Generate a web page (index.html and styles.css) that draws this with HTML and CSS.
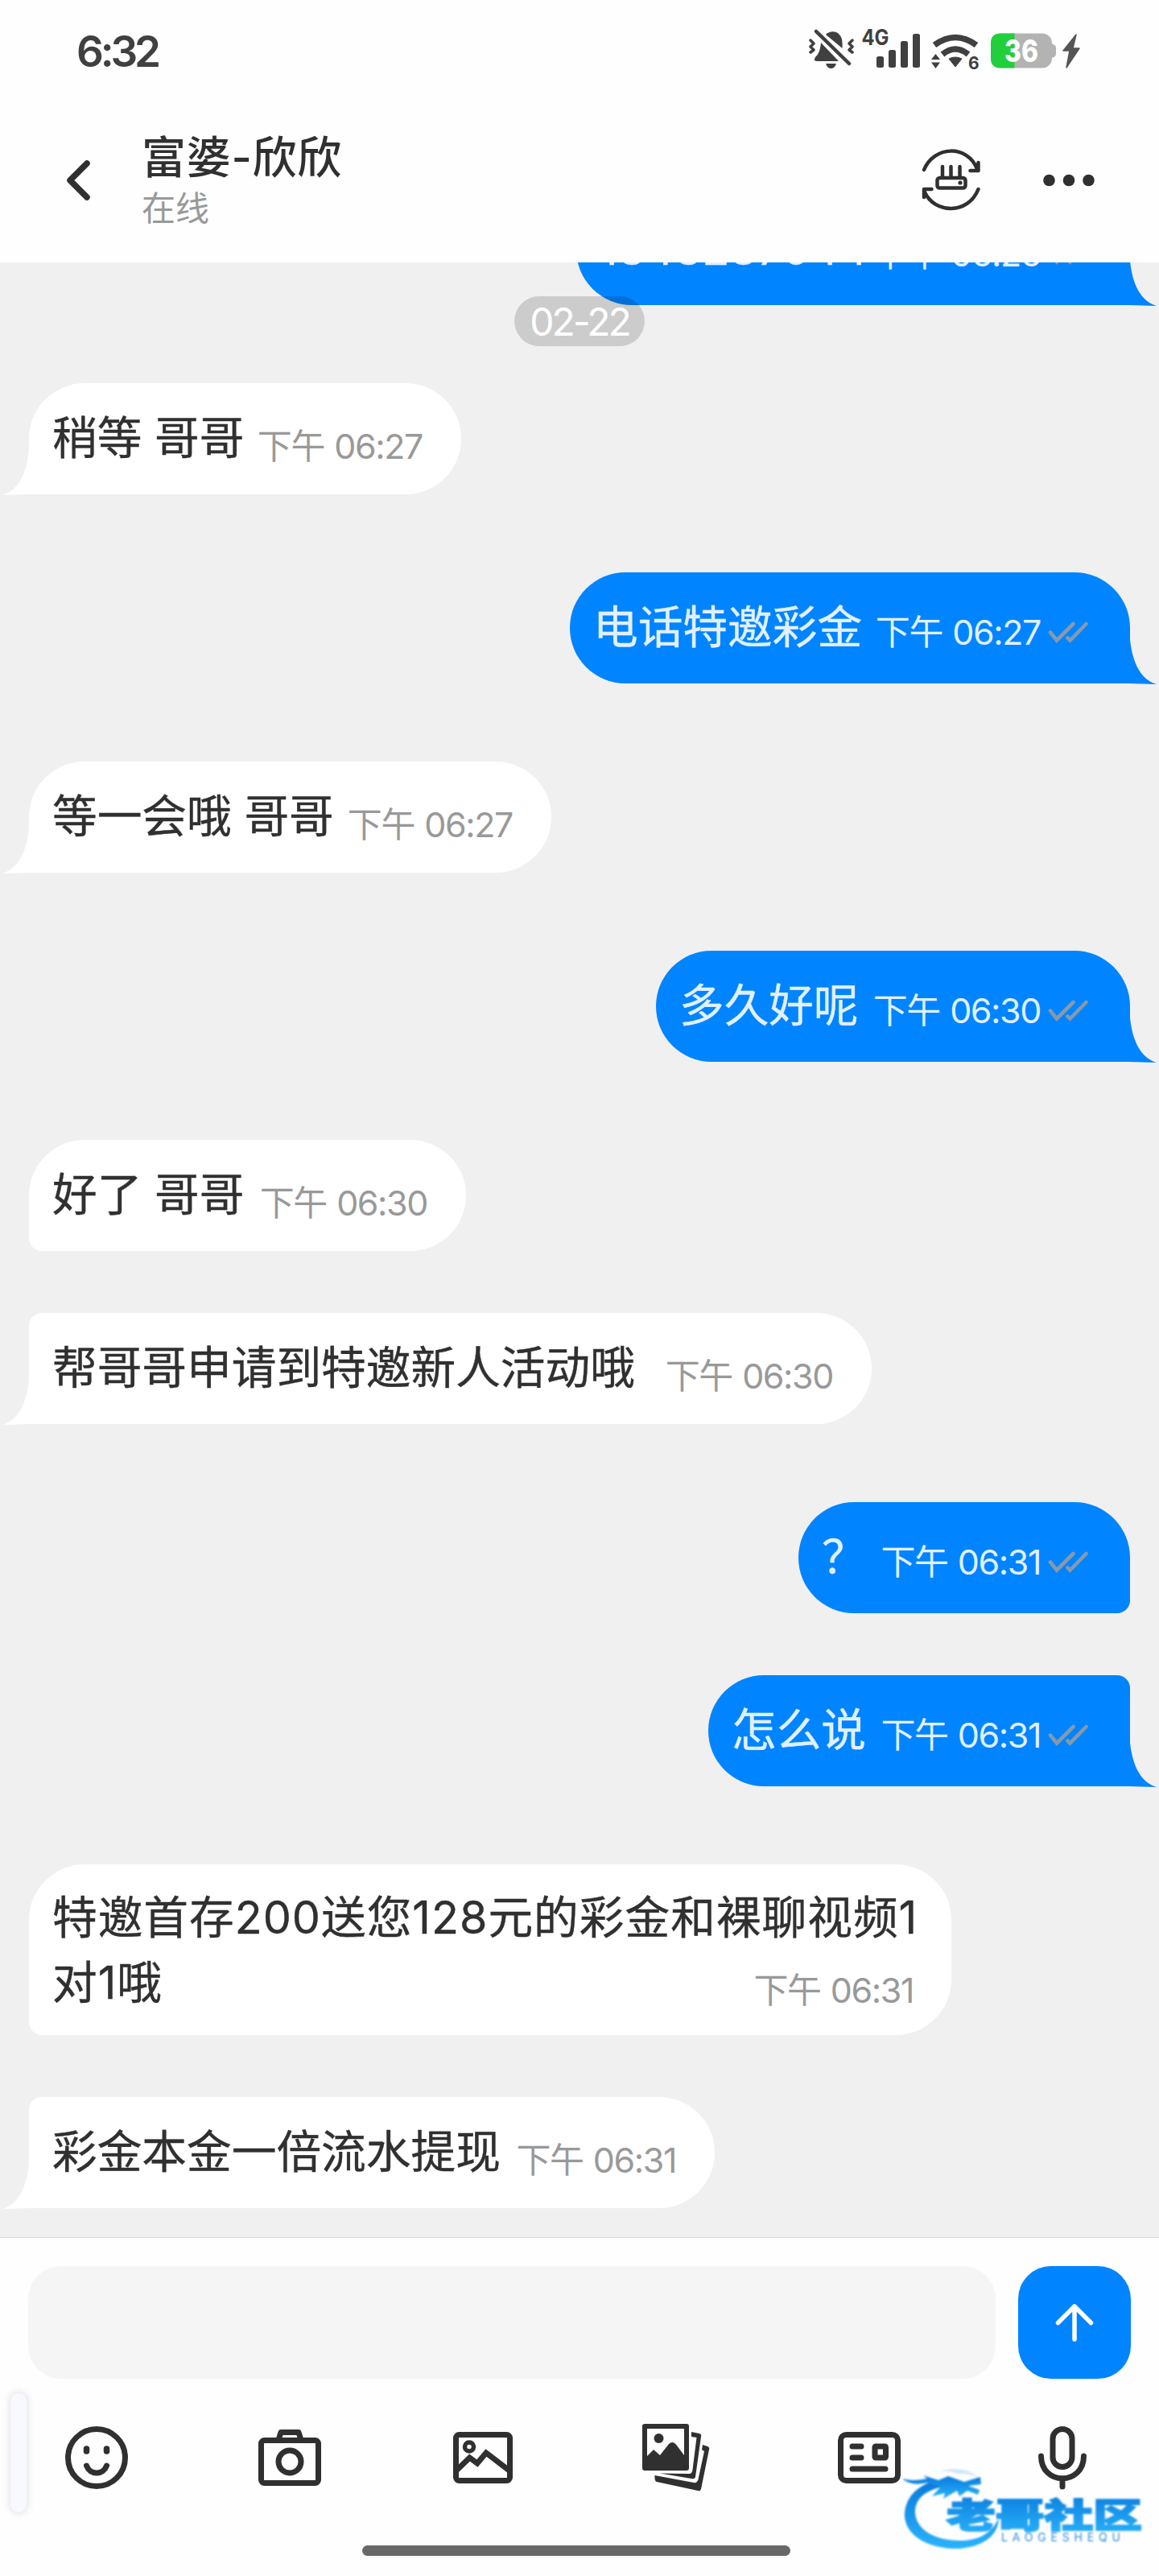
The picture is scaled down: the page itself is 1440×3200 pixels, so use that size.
FILE: index.html
```html
<!DOCTYPE html>
<html lang="zh-CN">
<head>
    <meta charset="UTF-8">
    <meta name="viewport" content="width=device-width, initial-scale=1.0">
    <title>富婆-欣欣</title>
    <link rel="stylesheet" href="styles.css">
</head>
<body>
<!-- shared shapes -->
<svg class="defs" width="0" height="0">
    <symbol id="tail-out" viewBox="0 0 34 70"><path d="M0 0C1 30 8 62 34 70L0 69Z"/></symbol>
    <symbol id="tail-in" viewBox="0 0 34 70"><path d="M34 0C33 30 26 62 0 70L34 69Z"/></symbol>
    <symbol id="read" viewBox="0 0 50 28">
        <path d="M3 13.5L11 23.5L31.500 3M24.500 20.500L27.500 23.500L47.500 3" fill="none" stroke="#8799aa" stroke-width="4.600" stroke-linecap="round"/>
    </symbol>
</svg>

<div class="screen">
    <div class="status">
        <div class="clock">6:32</div>
        <svg class="status-icons" viewBox="0 0 344 60" width="344" height="60">
            <!-- muted bell -->
            <g fill="#404040">
                <path d="M26 13C32 7 43 8 46 19Q47 24 46.500 30Z"/>
                <path d="M20 23Q19 36 13 41Q10 46 15 46H42Z"/>
                <path d="M26 49H39Q37 55 32.500 55Q28 55 26 49Z"/>
            </g>
            <g fill="none" stroke="#404040" stroke-linecap="round" stroke-linejoin="round">
                <path d="M14 9L55 49" stroke-width="4.500"/>
                <path d="M7 20L11 24L7 28L11 32L7 35M59 20L55 24L59 28L55 32L59 35" stroke-width="3.500"/>
            </g>
            <text class="net" x="70.500" y="26" textLength="34" lengthAdjust="spacingAndGlyphs">4G</text>
            <!-- signal -->
            <g fill="#404040">
                <rect x="89" y="40" width="9" height="14" rx="2.500"/>
                <rect x="104" y="32" width="9" height="22" rx="2.500"/>
                <rect x="119" y="21" width="9" height="33" rx="2.500"/>
                <rect x="134" y="12" width="9" height="42" rx="2.500"/>
            </g>
            <!-- wifi -->
            <g fill="none" stroke="#404040" stroke-width="7.500">
                <path d="M161 26Q187 7 213 26"/>
                <path d="M171 37.500Q187 24.500 203 37.500"/>
            </g>
            <path d="M179 43Q187 39 195 43L187 53Z" fill="#404040" stroke="#404040" stroke-linejoin="round"/>
            <path d="M157 44L162.500 37L168 44ZM157 47.500H168L162.500 55Z" fill="#404040"/>
            <text class="wifi-gen" x="203" y="56">6</text>
            <!-- battery -->
            <path d="M306 24Q312 26 312 29V37Q312 41 306 42Z" fill="#b3b3b3"/>
            <rect x="231" y="11.500" width="76" height="43" rx="12" fill="#b3b3b3"/>
            <path d="M260.500 11.500V54.500H243Q231 54.500 231 42.500V23.500Q231 11.500 243 11.500Z" fill="#21cf3c"/>
            <text class="battery" x="248" y="46.500" textLength="42" lengthAdjust="spacingAndGlyphs">36</text>
            <path d="M337 13L321 33H329L325 54L341 30H333Z" fill="#555" stroke="#555" stroke-width="1.500" stroke-linejoin="round"/>
        </svg>
    </div>

    <div class="header">
        <svg class="back" viewBox="0 0 40 60" width="40" height="60">
            <path d="M28 9L7 30L28 51" fill="none" stroke="#303030" stroke-width="7.500" stroke-linecap="round" stroke-linejoin="round"/>
        </svg>
        <div class="contact">
            <div class="name">富婆-欣欣</div>
            <div class="online">在线</div>
        </div>
        <svg class="line" viewBox="0 0 80 80" width="80" height="80" fill="none" stroke="#303030" stroke-width="4.500" stroke-linecap="round" stroke-linejoin="round">
            <path d="M7 27C19-3 61-5 73 26M64.500 28H74.500V18"/>
            <path d="M74.500 51C62 83 20 82 7.500 54M16.500 51H7V61"/>
            <path d="M30 23V36M40.500 23V36M51.500 23V36"/>
            <rect x="23.500" y="37" width="35" height="12.500" rx="3"/>
            <circle cx="52" cy="43" r="2.600" fill="#303030" stroke="none"/>
        </svg>
        <svg class="more" viewBox="0 0 66 20" width="66" height="20" fill="#303030">
            <circle cx="8.500" cy="10" r="7.300"/><circle cx="33" cy="10" r="7.300"/><circle cx="57.500" cy="10" r="7.300"/>
        </svg>
    </div>

    <div class="chat">
        <div class="date">02-22</div>
        <div class="msg out end w-688">
            <span class="text">1343287044</span>
            <span class="time">下午 06:26</span><svg class="check"><use href="#read"/></svg>
            <svg class="tail"><use href="#tail-out"/></svg>
        </div>
        <div class="msg in end w-537">
            <span class="text">稍等 哥哥</span>
            <span class="time">下午 06:27</span>
            <svg class="tail"><use href="#tail-in"/></svg>
        </div>
        <div class="msg out end w-696">
            <span class="text">电话特邀彩金</span>
            <span class="time">下午 06:27</span><svg class="check"><use href="#read"/></svg>
            <svg class="tail"><use href="#tail-out"/></svg>
        </div>
        <div class="msg in end w-649">
            <span class="text">等一会哦 哥哥</span>
            <span class="time">下午 06:27</span>
            <svg class="tail"><use href="#tail-in"/></svg>
        </div>
        <div class="msg out end w-589">
            <span class="text">多久好呢</span>
            <span class="time">下午 06:30</span><svg class="check"><use href="#read"/></svg>
            <svg class="tail"><use href="#tail-out"/></svg>
        </div>
        <div class="msg in w-543">
            <span class="text">好了 哥哥</span>
            <span class="time">下午 06:30</span>
        </div>
        <div class="msg in next end w-1047">
            <span class="text">帮哥哥申请到特邀新人活动哦</span>
            <span class="time">下午 06:30</span>
            <svg class="tail"><use href="#tail-in"/></svg>
        </div>
        <div class="msg out w-412">
            <span class="text">？</span>
            <span class="time">下午 06:31</span><svg class="check"><use href="#read"/></svg>
        </div>
        <div class="msg out next end w-524">
            <span class="text">怎么说</span>
            <span class="time">下午 06:31</span><svg class="check"><use href="#read"/></svg>
            <svg class="tail"><use href="#tail-out"/></svg>
        </div>
        <div class="msg in long w-1146">
            <span class="text">特邀首存200送您128元的彩金和裸聊视频1<br>对1哦</span>
            <span class="time">下午 06:31</span>
        </div>
        <div class="msg in next end w-852">
            <span class="text">彩金本金一倍流水提现</span>
            <span class="time">下午 06:31</span>
            <svg class="tail"><use href="#tail-in"/></svg>
        </div>
    </div>

    <div class="footer">
        <div class="compose">
            <div class="input"></div>
            <button class="send" type="button">
                <svg viewBox="0 0 60 60" width="60" height="60" fill="none" stroke="#fff" stroke-width="5.500" stroke-linecap="round" stroke-linejoin="round">
                    <path d="M30 51V10M9.500 30.500L30 10L50.500 30.500"/>
                </svg>
            </button>
        </div>
        <div class="tools">
            <svg viewBox="0 0 90 90" fill="none" stroke="#303030" stroke-width="7" stroke-linecap="round">
                <circle cx="45" cy="45" r="35.500"/>
                <path d="M32.500 34V37M57.500 34V37" stroke-width="7.500"/>
                <path d="M32.500 55C37 67 53 67 57.500 55"/>
            </svg>
            <svg viewBox="0 0 90 90" fill="none" stroke="#303030" stroke-width="7" stroke-linejoin="round">
                <rect x="9.500" y="23.500" width="71" height="53" rx="4"/>
                <path d="M31 23L34 13.500H56L59 23"/>
                <circle cx="45" cy="50" r="14"/>
            </svg>
            <svg viewBox="0 0 90 90" fill="none" stroke="#303030" stroke-width="7" stroke-linejoin="round">
                <rect x="11.500" y="16.500" width="67" height="57" rx="4"/>
                <circle cx="28" cy="31.500" r="5.500" stroke-width="5.500"/>
                <path d="M12 61L28.500 45L38 52L49 39L79 62" stroke-linejoin="miter"/>
            </svg>
            <svg viewBox="0 0 90 90">
                <path d="M6 3H58Q61 3 61 6V58Q61 61 58 61H6Q3 61 3 58V6Q3 3 6 3ZM9 9V43L17 35L25 42L36 28Q41 23 46 30L55 42V9Z" fill="#303030" fill-rule="evenodd"/>
                <circle cx="23.500" cy="21" r="6" fill="#303030"/>
                <path d="M64 13L74 15Q77 16 76 19L69 69Q68 72 64 71L25 64.500L61 65Q65 65 65.500 60L70.500 20L64 19Z" fill="#303030"/>
                <path d="M78 29L84 31Q87 32 86 35L76 84Q75 87 72 86L21 75Q18 74 18.500 67L67 76Q71 77 72.500 72L80 37L77 35Z" fill="#303030"/>
            </svg>
            <svg viewBox="0 0 90 90" fill="none" stroke="#303030" stroke-width="7" stroke-linejoin="round">
                <rect x="9.500" y="16.500" width="71" height="57" rx="7"/>
                <path d="M24 31H35M24 45H35M24 59H65" stroke-linecap="round"/>
                <rect x="52" y="31" width="13.500" height="14" rx="1"/>
            </svg>
            <svg viewBox="0 0 90 90" fill="none" stroke="#303030" stroke-width="7" stroke-linecap="round">
                <rect x="33" y="9.500" width="24" height="47" rx="12"/>
                <path d="M18.500 43C18.500 80 71.500 80 71.500 43M45 72V81"/>
            </svg>
        </div>
        <div class="home-bar"></div>
        <div class="edge-handle"></div>
        <svg class="watermark" viewBox="0 0 310 110" width="310" height="110">
            <defs>
                <linearGradient id="sea" x1="0" y1="0" x2="0" y2="1">
                    <stop offset="0" stop-color="#0878dc"/>
                    <stop offset="1" stop-color="#2ab4fb"/>
                </linearGradient>
            </defs>
            <g fill="url(#sea)">
                <path d="M52 20C26 26 11 44 12 66C15 92 46 106 80 105C112 102 128 88 129 67C119 88 102 95 80 95C49 95 26 81 25 60C25 43 37 33 60 28Z"/>
                <path d="M9 18Q22 22 40 18L35 14L54 20L66 15L86 22L106 16L107 25L91 27L105 32L103 38L90 33L80 40L77 33L60 43L62 36L46 40L57 28L40 23Q20 28 9 18Z"/>
                <path d="M48 13Q60 5 78 12Q96 12 104 17Q96 9 84 7Q62 4 48 13Z" opacity=".2"/>
            </g>
            <text class="brand" x="64" y="79" textLength="243" lengthAdjust="spacingAndGlyphs" fill="url(#sea)" stroke="url(#sea)">老哥社区</text>
            <text class="brand-latin" x="132" y="96" textLength="148">LAOGESHEQU</text>
        </svg>
    </div>
</div>
</body>
</html>
```

FILE: styles.css
```css
* {
    box-sizing: border-box;
}

body {
    margin: 0;
    background: #fefefe;
    font-family: Inter, "Noto Sans CJK SC", sans-serif;
    color: #303030;
}

svg {
    display: block;
}

.defs {
    position: absolute;
}

.screen {
    width: 1440px;
    height: 3200px;
    display: flex;
    flex-direction: column;
    overflow: hidden;
}

/* status bar */
.status {
    height: 122px;
    padding: 0 96px 0 95px;
    display: flex;
    justify-content: space-between;
}

.clock {
    margin-top: 31px;
    font-size: 53px;
    line-height: 66px;
    font-weight: 600;
    letter-spacing: -4.2px;
    color: #404040;
}

.status-icons {
    width: 344px;
    margin-top: 30px;
    font-weight: 700;
}

.net {
    font-size: 27px;
    fill: #404040;
}

.wifi-gen {
    font-size: 21px;
    fill: #404040;
}

.battery {
    font-size: 38px;
    font-weight: 800;
    fill: #fff;
}

/* header */
.header {
    height: 204px;
    padding: 0 79px 0 80px;
    display: flex;
    align-items: center;
}

.contact {
    margin-left: 56px;
    flex: 1;
}

.name {
    margin-top: -3px;
    font-size: 55px;
    line-height: 70px;
    font-weight: 500;
    letter-spacing: .7px;
}

.online {
    margin-top: 3px;
    font-size: 42px;
    line-height: 52px;
    color: #999;
}

.line {
    margin-right: 74px;
}

/* conversation */
.chat {
    position: relative;
    height: 2453px;
    padding: 0 36px;
    background: #f0f0f0;
    display: flex;
    flex-direction: column;
    overflow: hidden;
}

.date {
    position: absolute;
    top: 42px;
    left: 639px;
    z-index: 1;
    width: 162px;
    height: 62px;
    border-radius: 31px;
    background: rgba(0, 0, 0, .15);
    color: #fff;
    font-size: 48px;
    line-height: 63px;
    letter-spacing: -3px;
    text-align: center;
}

.msg {
    position: relative;
    flex: none;
    height: 138px;
    margin-bottom: 77px;
    padding-left: 29px;
    display: flex;
    align-items: center;
    border-radius: 69px;
}

.msg.end {
    margin-bottom: 97px;
}

.msg:nth-child(2) {
    margin-top: -85px;
}

.in {
    align-self: flex-start;
    padding-right: 48px;
    background: #fff;
    border-bottom-left-radius: 16px;
}

.out {
    align-self: flex-end;
    padding-right: 52px;
    background: #0084ff;
    color: #e0f0ff;
    border-bottom-right-radius: 16px;
}

.in.next {
    border-top-left-radius: 16px;
}

.out.next {
    border-top-right-radius: 16px;
}

.in.end {
    border-bottom-left-radius: 0;
}

.out.end {
    border-bottom-right-radius: 0;
}

.text {
    margin-top: -3px;
    font-size: 55.700px;
    line-height: 81px;
    white-space: nowrap;
    -webkit-text-stroke: .4px;
}

.time {
    margin-left: auto;
    padding-top: 17px;
    font-size: 43px;
    line-height: 52px;
    letter-spacing: -1.400px;
    word-spacing: 1.500px;
    white-space: nowrap;
}

.in .time {
    color: #999;
}

.out .time {
    padding-top: 9px;
}

.check {
    width: 50px;
    height: 28px;
    margin-left: 9px;
    margin-top: 11px;
}

.tail {
    position: absolute;
    bottom: -1px;
    width: 34px;
    height: 70px;
}

.in .tail {
    left: -33px;
    fill: #fff;
}

.out .tail {
    right: -33px;
    fill: #0084ff;
}

.long {
    height: 212px;
    border-radius: 69px 69px 69px 16px;
}

.long .time {
    position: absolute;
    right: 47px;
    bottom: 30px;
    padding: 0;
}

.long .text {
    margin-top: -1px;
    letter-spacing: 1px;
}

/* bubble widths */
.w-412 { width: 412px; }
.w-524 { width: 524px; }
.w-537 { width: 537px; }
.w-543 { width: 543px; }
.w-589 { width: 589px; }
.w-649 { width: 649px; }
.w-688 { width: 688px; }
.w-696 { width: 696px; }
.w-852 { width: 852px; }
.w-1047 { width: 1047px; }
.w-1146 { width: 1146px; }

/* footer */
.footer {
    position: relative;
    flex: 1;
    border-top: 1px solid #d8d8d8;
}

.compose {
    display: flex;
    gap: 28px;
    padding: 35px 35px 0;
}

.input {
    flex: 1;
    height: 140px;
    border-radius: 41px;
    background: #f5f5f5;
}

.send {
    width: 140px;
    height: 140px;
    padding: 0;
    border: 0;
    border-radius: 41px;
    background: #0084ff;
    display: flex;
    align-items: center;
    justify-content: center;
}

.tools {
    display: grid;
    grid-template-columns: repeat(6, 240px);
    justify-items: center;
    margin-top: 53px;
}

.tools svg {
    width: 90px;
    height: 90px;
}

.home-bar {
    width: 532px;
    height: 13px;
    margin: 64px auto 0;
    border-radius: 7px;
    background: #686868;
    transform: translateX(-4px);
}

.edge-handle {
    position: absolute;
    left: 13px;
    top: 193px;
    width: 20px;
    height: 148px;
    border-radius: 10px;
    background: #f8f9ff;
    box-shadow: 0 0 8px 2px rgba(60, 60, 80, .13);
}

.watermark {
    position: absolute;
    left: 1112px;
    top: 281px;
    filter: blur(.8px);
}

.brand {
    font-family: "Noto Sans CJK SC", sans-serif;
    font-size: 42px;
    font-weight: 900;
    stroke-width: 2px;
}

.brand-latin {
    font-size: 14px;
    fill: #2f8fe0;
}
```
